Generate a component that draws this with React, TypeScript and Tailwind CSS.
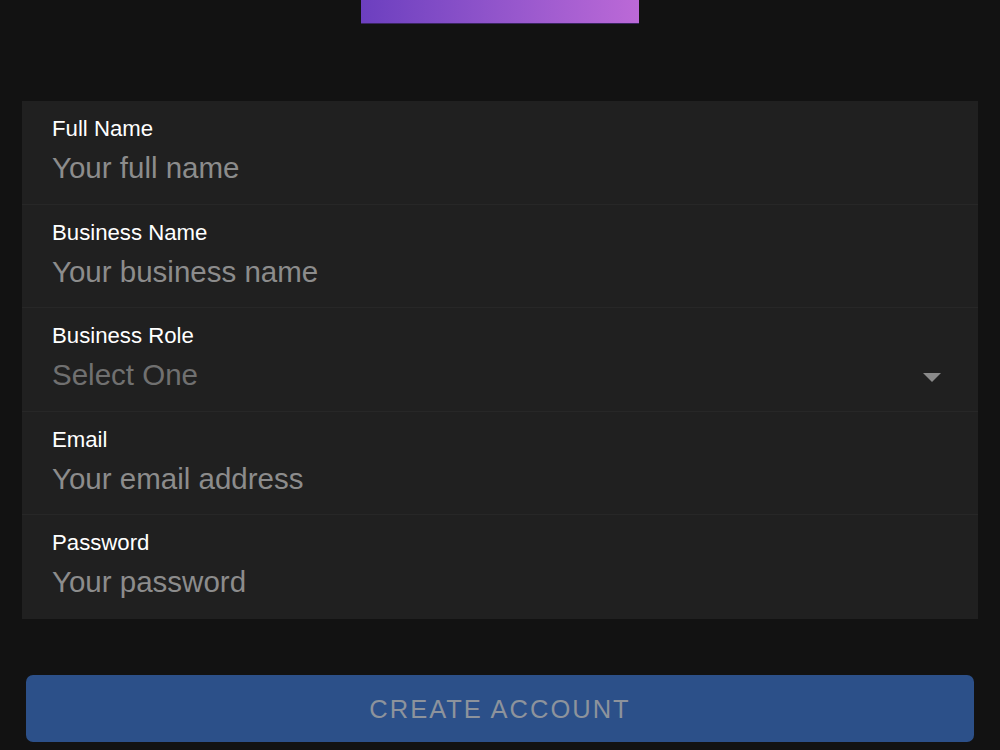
import React from "react";

const fields = [
  { label: "Full Name", placeholder: "Your full name" },
  { label: "Business Name", placeholder: "Your business name" },
  { label: "Business Role", placeholder: "Select One", select: true },
  { label: "Email", placeholder: "Your email address" },
  { label: "Password", placeholder: "Your password" },
];

export default function App() {
  return (
    <div
      className="w-[1000px] h-[750px] bg-[#121212] overflow-hidden flex flex-col"
      style={{ fontFamily: '"Liberation Sans", Arial, sans-serif' }}
    >
      <div className="flex justify-center">
        <div className="w-[278px] h-[24px] bg-gradient-to-r from-[#6c3fbf] to-[#bc69d7] border-b border-[#3a2660]" />
      </div>
      <div className="mt-[77px] mx-[22px] bg-[#202020] flex flex-col">
        {fields.map((f, i) => (
          <div
            key={f.label}
            className={`h-[103.6px] pl-[30px] pr-[36px] pt-[14px] flex flex-col ${
              i < fields.length - 1 ? "border-b border-[#272727]" : ""
            }`}
          >
            <div className="text-[22.2px] leading-[28px] text-white">{f.label}</div>
            <div className="mt-[7px] flex items-center justify-between">
              <div
                className={`text-[29.5px] leading-[36px] ${
                  f.select ? "text-[#707070]" : "text-[#8c8c8c]"
                }`}
              >
                {f.placeholder}
              </div>
              {f.select && (
                <svg width="18" height="9" viewBox="0 0 18 9" className="mt-[4px] mr-[1px]">
                  <path d="M0 0 L18 0 L9 9 Z" fill="#8a8a8a" />
                </svg>
              )}
            </div>
          </div>
        ))}
      </div>
      <div className="mt-[56px] mx-[26px] h-[67px] rounded-[7px] bg-[#2c5089] flex items-center justify-center">
        <span className="text-[25.5px] tracking-[2px] text-[#8d939c] mt-[2px]">CREATE ACCOUNT</span>
      </div>
    </div>
  );
}
